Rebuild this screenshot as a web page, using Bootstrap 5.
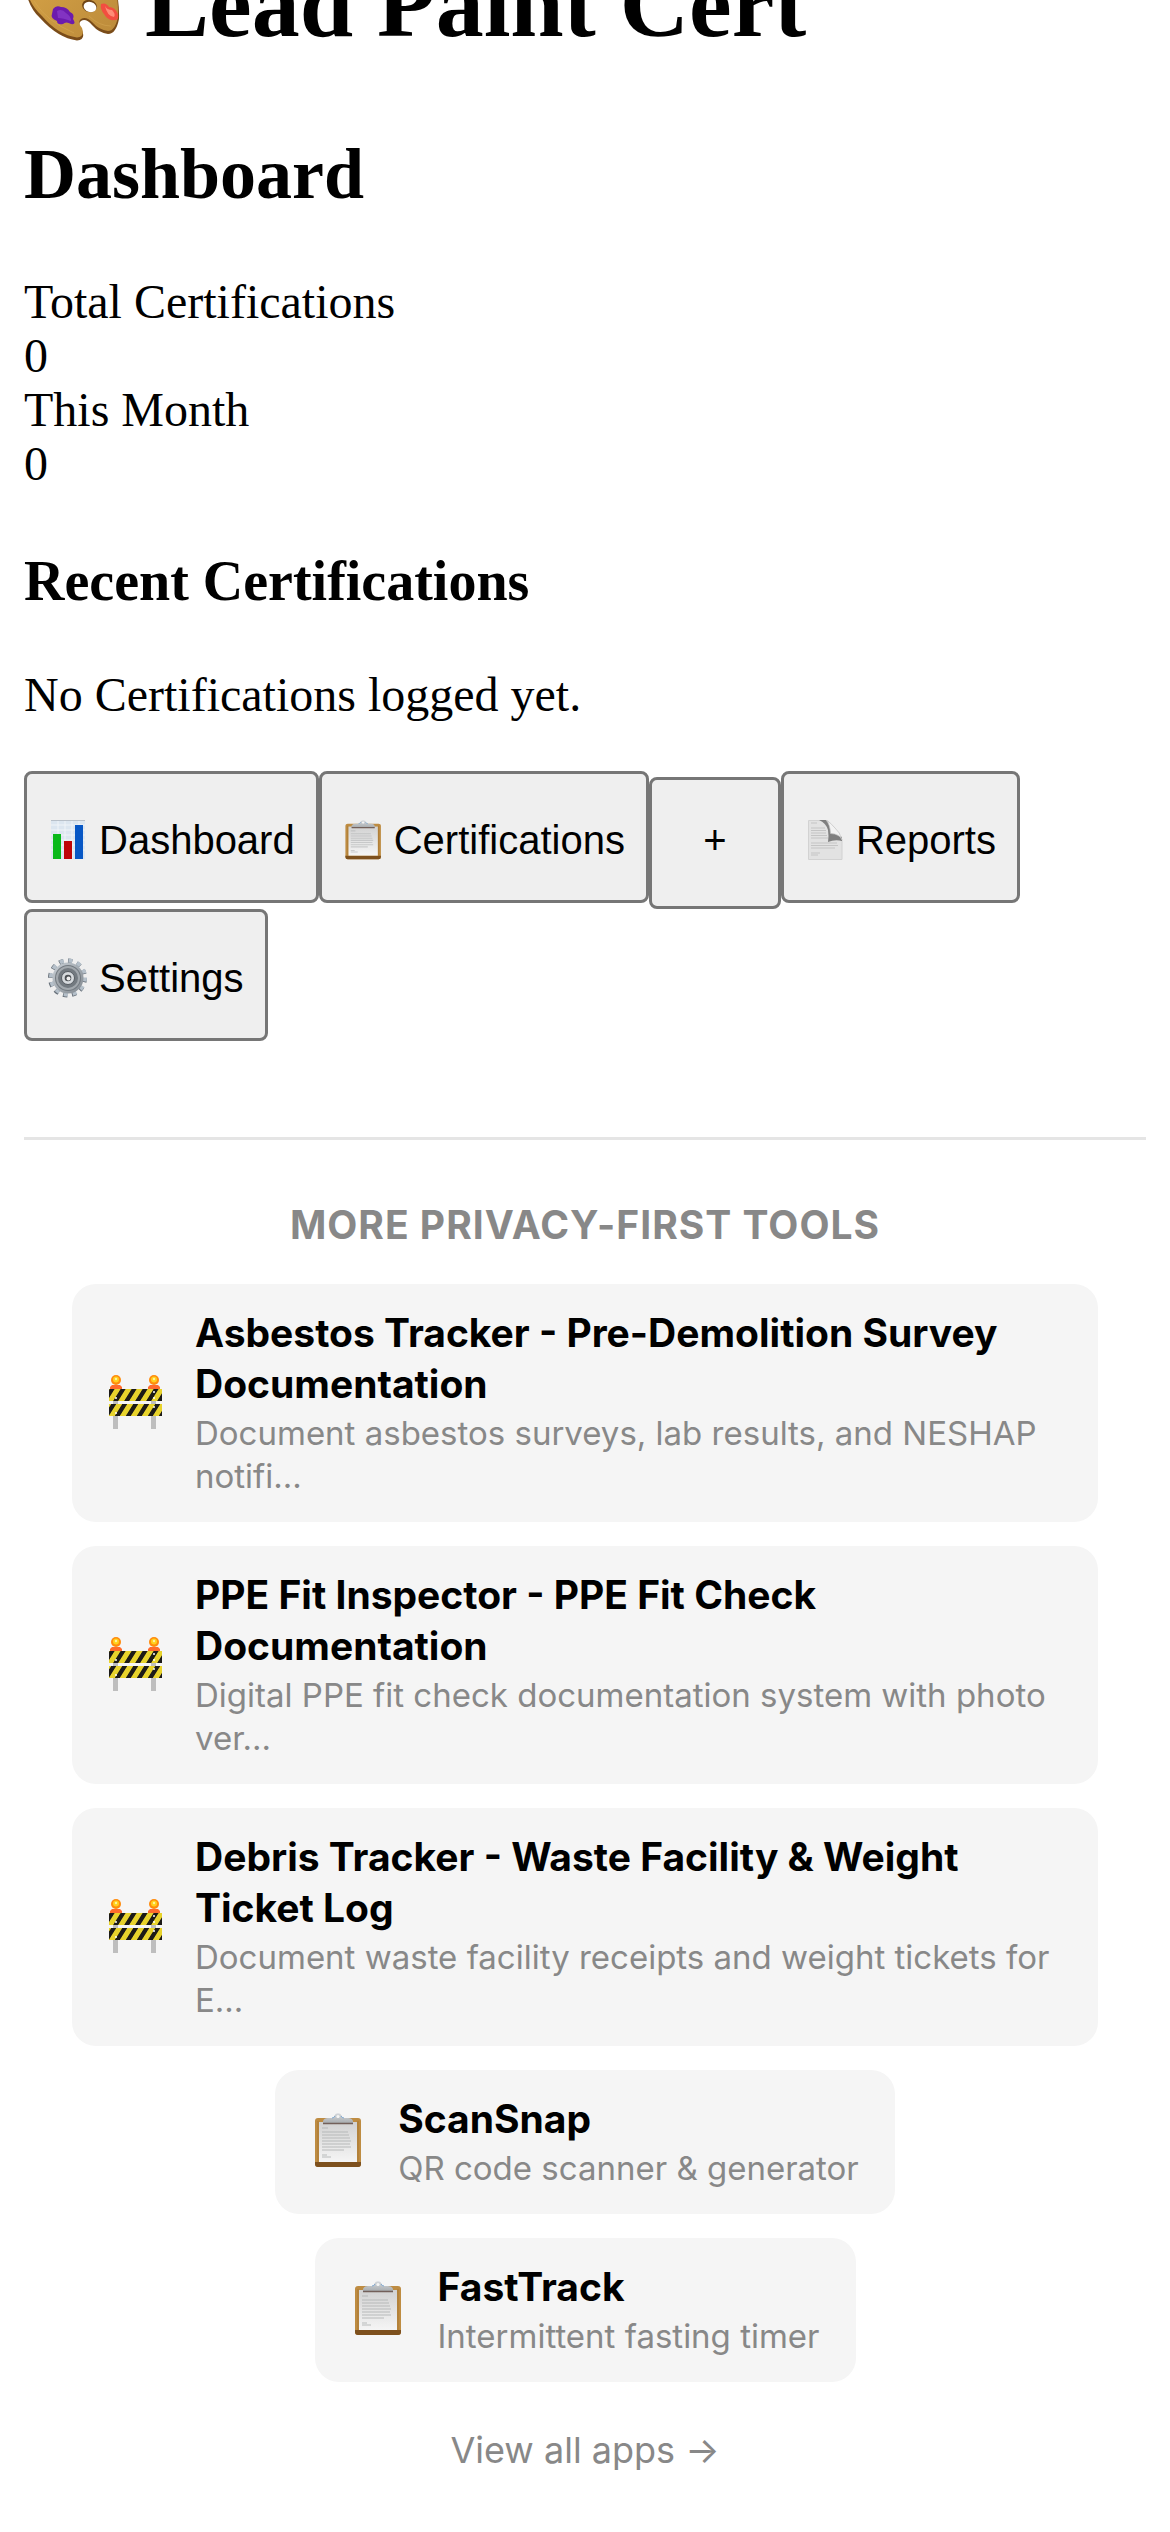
<!DOCTYPE html>
<html lang="en">
<head>
<meta charset="utf-8">
<meta name="viewport" content="width=device-width, initial-scale=1">
<title>Lead Paint Cert</title>
<link href="https://cdn.jsdelivr.net/npm/bootstrap@5.3.0/dist/css/bootstrap.min.css" rel="stylesheet">
<style>
body { font-family: "Liberation Serif", "Times New Roman", serif; font-size: 48px; line-height: 54px; color: #000; background: #fff; overflow-x: hidden; }
h1, h2, h3, p { margin: 0; font-weight: 700; color: #000; }
p { font-weight: 400; }
.app-head { margin-top: -51px; gap: 24px; }
.app-head h1 { font-size: 96px; line-height: 110px; }
.page-title { font-size: 72px; line-height: 83px; margin: 74px 0 59px; }
.recent-title { font-size: 56px; line-height: 64px; margin: 58px 0 55px; }
.tabs { margin-top: 49px; row-gap: 6px; }
.tab-btn { height: 132px; min-width: 132px; padding: 6px 21px 0 18px; gap: 10px; border: 3px solid #767676; border-radius: 8px; background: #efefef; color: #000; font-family: "Liberation Sans", Arial, sans-serif; font-size: 40px; line-height: 46px; }
.tab-add { padding: 0 18px 6px; margin: 6px 0 -6px; }
.more { margin-top: 96px; padding: 61px 48px 56px; border-top: 3px solid #e5e5e5; font-family: Inter, "Liberation Sans", sans-serif; }
.more-title { font-size: 39px; line-height: 48px; font-weight: 700; letter-spacing: 1px; color: #888; margin-bottom: 35px; text-transform: uppercase; }
.tool { padding: 23px 36px 24px; gap: 30px; border-radius: 24px; background: #f5f5f5; color: #000; max-width: 100%; }
.tool-name { font-size: 39px; line-height: 51px; font-weight: 700; margin-bottom: 3px; }
.tool-desc { font-size: 33px; line-height: 43px; color: #888; }
.tool-list { gap: 24px; }
.all-link { margin-top: 46px; font-size: 36px; line-height: 44px; color: #888; }
</style>
</head>
<body>
<svg width="0" height="0" class="position-absolute" aria-hidden="true">
  <defs>
    <linearGradient id="paper" x1="0" y1="0" x2="0" y2="1"><stop offset="0" stop-color="#d2d2d2"/><stop offset="1" stop-color="#f5f5f5"/></linearGradient>
    <linearGradient id="clip" x1="0" y1="0" x2="0" y2="1"><stop offset="0" stop-color="#d5d9dd"/><stop offset="1" stop-color="#a9adb0"/></linearGradient>
    <linearGradient id="wood" x1="0" y1="0" x2="1" y2="1"><stop offset="0" stop-color="#d9a648"/><stop offset="1" stop-color="#bb8a3a"/></linearGradient>
    <linearGradient id="metal" x1="0" y1="0" x2="1" y2="1"><stop offset="0" stop-color="#c9d0d6"/><stop offset="1" stop-color="#80878e"/></linearGradient>
    <linearGradient id="fold" x1="0" y1="1" x2="1" y2="0"><stop offset="0" stop-color="#555"/><stop offset=".5" stop-color="#ddd"/><stop offset="1" stop-color="#fff"/></linearGradient>
    <pattern id="hazard" width="11" height="12" patternUnits="userSpaceOnUse" patternTransform="skewX(-32)"><rect width="11" height="12" fill="#e8d32c"/><rect width="5" height="12" fill="#1c1a17"/></pattern>
    <symbol id="clipboard" viewBox="0 0 57 57">
      <rect x="4" y="5" width="46" height="49" rx="3" fill="#be8c42"/>
      <path d="M4 49h46v2q0 3-3 3H7q-3 0-3-3z" fill="#7d501d"/>
      <path d="M7 8v41M47 8v41" stroke="#a97935" stroke-width="1"/>
      <rect x="8" y="9" width="38" height="40" fill="url(#paper)"/>
      <path d="M11 15h6M11 19h26M11 22h27M11 25h28M11 28h29M11 31h28M11 34h29M11 37h22M11 42h5M11 44h9" stroke="#b4b6b7" stroke-width="1.500" opacity=".6"/>
      <path d="M12 10V8q1-3 5-3h4q2 0 2.500-2.500a3.800 3.800 0 0 1 7 0Q31 5 33 5h4q4 0 5 3v2z" fill="url(#clip)"/>
      <path d="M12 10.500h30" stroke="#73605a" stroke-width="1.500"/>
      <circle cx="27" cy="3.500" r="1.600" fill="#f5f5f5"/>
      <path d="M21 5q2 0 3-2M33 5q-2 0-3-2" stroke="#7fa9d2" fill="none"/>
    </symbol>
    <symbol id="barrier" viewBox="0 0 57 57">
      <path d="M5 14h5v41H5zM43 14h5v41h-5z" fill="#bebebe"/>
      <path d="M2 15v-2l2-2h8l2 2v2zM40 15v-2l2-2h8l2 2v2z" fill="#ff6a2c"/>
      <circle cx="8" cy="6" r="5" fill="#ff8b0d"/><circle cx="46" cy="6" r="5" fill="#ff8b0d"/>
      <circle cx="8" cy="5.500" r="3" fill="#ffd01e"/><circle cx="46" cy="5.500" r="3" fill="#ffd01e"/>
      <circle cx="8" cy="5" r="1.200" fill="#fff2a0"/><circle cx="46" cy="5" r="1.200" fill="#fff2a0"/>
      <rect x="1" y="15" width="53" height="12" fill="url(#hazard)"/>
      <rect x="1" y="30" width="53" height="12" fill="url(#hazard)"/>
      <g fill="#fff"><circle cx="8" cy="24" r="1"/><circle cx="46" cy="18" r="1"/><circle cx="46" cy="24" r="1"/><circle cx="8" cy="39" r="1"/><circle cx="46" cy="33" r="1"/></g>
    </symbol>
  </defs>
</svg>

<main class="px-4">
  <header class="app-head d-flex align-items-center">
    <svg class="flex-shrink-0" width="97" height="96" viewBox="0 0 97 96" aria-hidden="true">
      <path d="M3 40Q-2 10 24 1Q60-8 82 14Q96 32 95 63Q92 78 84 78Q75 77 68 69Q62 62 57 65Q53 68 58 74Q62 84 53 84.500Q34 82 16 62Q7 54 3 40z" fill="#7a4c19"/>
      <path d="M4 39Q-1 9 24 0Q60-8 82 13Q95 31 94 61Q91 75 84 75Q75 74 68 66Q62 60 57 63Q53 66 58 72Q61 81 53 81.500Q34 79 18 60Q8 51 4 39z" fill="url(#wood)"/>
      <path d="M10 45Q22 65 50 77M65 60Q75 70 87 70" stroke="#dcae5b" stroke-width="1" fill="none" opacity=".4"/>
      <ellipse cx="65.500" cy="50" rx="7.500" ry="6" transform="rotate(18 65.500 50)" fill="#704616"/>
      <ellipse cx="66" cy="51" rx="6.500" ry="5" transform="rotate(18 66 51)" fill="#fff"/>
      <path d="M29 53Q32 49 37 51Q43 51 46 56Q51 58 49 63Q53 69 47 68Q42 65 39 68Q33 69 33 65Q26 62 28 58z" fill="#6c1bad"/>
      <path d="M33 55Q38 52 42 57Q47 60 47 65Q39 62 34 62z" fill="#8233c2"/>
      <path d="M77 48Q82 46 85 51Q91 51 94 58Q95 65 90 64Q84 65 80 58Q76 53 77 48z" fill="#f24e40"/>
      <path d="M81 50Q83 54 88 54Q92 58 90 61Q83 60 81 50z" fill="#ff8c76"/>
    </svg>
    <h1>Lead Paint Cert</h1>
  </header>

  <h2 class="page-title">Dashboard</h2>
  <div>Total Certifications</div>
  <div>0</div>
  <div>This Month</div>
  <div>0</div>
  <h3 class="recent-title">Recent Certifications</h3>
  <p>No Certifications logged yet.</p>

  <nav class="tabs d-flex flex-wrap align-items-start" aria-label="Sections">
    <button type="button" class="tab-btn d-inline-flex align-items-center justify-content-center">
      <svg width="44" height="40" viewBox="0 0 44 40" aria-hidden="true"><rect x="6" width="34" height="39" fill="#dce6f0"/><path d="M6 5h34M6 10h34M6 15h34M6 20h34M6 25h34M6 30h34M13 0v39M20 0v39M27 0v39M34 0v39" stroke="#fff" opacity=".6"/><path d="M6 .5h34" stroke="#b8c0c9"/><rect x="8" y="14" width="8" height="25" fill="#08b91b"/><rect x="19" y="21" width="8" height="18" fill="#be0508"/><rect x="30" y="5" width="8" height="34" fill="#0757c5"/></svg>
      <span>Dashboard</span></button>
    <button type="button" class="tab-btn d-inline-flex align-items-center justify-content-center">
      <svg width="44" height="40" viewBox="-1 0 57 55" preserveAspectRatio="none" aria-hidden="true"><use href="#clipboard" x="2" width="57" height="57"/></svg>
      <span>Certifications</span></button>
    <button type="button" class="tab-btn tab-add d-inline-flex align-items-center justify-content-center" aria-label="Add">+</button>
    <button type="button" class="tab-btn d-inline-flex align-items-center justify-content-center">
      <svg width="44" height="40" viewBox="0 0 44 40" aria-hidden="true"><path d="M6.500.5H25q4 4 4 10q9 2 11 10v19H6.500z" fill="#e2e2e2" stroke="#d2d2d2"/><path d="M9 3h6M9 8h14M9 10.500h15M9 13h15M9 15.500h16M9 18h17M9 23h26M9 25.500h27M9 28h24M9 33h9M9 35h7" stroke="#c4c4c4"/><path d="M17 0h7q5 2 5 12l11 5v4q-7-2-14 1q1-6 0-12q-2-7-9-10z" fill="#555" opacity=".7"/><path d="M24 0q4 4 4.500 13.500Q38 14 40 20q-2-8-7-12Q29 3 24 0z" fill="#f3f3f3" stroke="#c0c0c0" stroke-width=".7"/></svg>
      <span>Reports</span></button>
    <button type="button" class="tab-btn d-inline-flex align-items-center justify-content-center">
      <svg width="44" height="40" viewBox="0 0 44 40" aria-hidden="true"><circle cx="22.500" cy="20" r="17" fill="none" stroke="#68717a" stroke-width="5" stroke-dasharray="4.300 4.600"/><circle cx="23" cy="19.500" r="17" fill="none" stroke="#b5c0ca" stroke-width="4" stroke-dasharray="4 4.900"/><circle cx="23" cy="20" r="15.500" fill="url(#metal)"/><circle cx="23" cy="20" r="13" fill="#737a80"/><circle cx="23" cy="20" r="11" fill="none" stroke="#a2a8ad" stroke-width="2"/><circle cx="23" cy="20" r="6.500" fill="#d6dadd" stroke="#565c62"/><circle cx="23" cy="20" r="3.300" fill="#4c5054"/><circle cx="23.500" cy="20.500" r="2" fill="#efefef"/></svg>
      <span>Settings</span></button>
  </nav>

  <section class="more">
    <div class="more-title text-center">More Privacy-First Tools</div>
    <div class="tool-list d-flex flex-column align-items-center">
      <a href="#" class="tool d-flex align-items-center text-decoration-none">
        <svg class="flex-shrink-0" width="57" height="57" aria-hidden="true"><use href="#barrier"/></svg>
        <div><div class="tool-name">Asbestos Tracker - Pre-Demolition Survey Documentation</div><div class="tool-desc">Document asbestos surveys, lab results, and NESHAP notifi...</div></div>
      </a>
      <a href="#" class="tool d-flex align-items-center text-decoration-none">
        <svg class="flex-shrink-0" width="57" height="57" aria-hidden="true"><use href="#barrier"/></svg>
        <div><div class="tool-name">PPE Fit Inspector - PPE Fit Check Documentation</div><div class="tool-desc">Digital PPE fit check documentation system with photo ver...</div></div>
      </a>
      <a href="#" class="tool d-flex align-items-center text-decoration-none">
        <svg class="flex-shrink-0" width="57" height="57" aria-hidden="true"><use href="#barrier"/></svg>
        <div><div class="tool-name">Debris Tracker - Waste Facility &amp; Weight Ticket Log</div><div class="tool-desc">Document waste facility receipts and weight tickets for E...</div></div>
      </a>
      <a href="#" class="tool d-flex align-items-center text-decoration-none">
        <svg class="flex-shrink-0" width="57" height="57" aria-hidden="true"><use href="#clipboard"/></svg>
        <div><div class="tool-name">ScanSnap</div><div class="tool-desc">QR code scanner &amp; generator</div></div>
      </a>
      <a href="#" class="tool d-flex align-items-center text-decoration-none">
        <svg class="flex-shrink-0" width="57" height="57" aria-hidden="true"><use href="#clipboard"/></svg>
        <div><div class="tool-name">FastTrack</div><div class="tool-desc">Intermittent fasting timer</div></div>
      </a>
    </div>
    <div class="all-link text-center"><a href="#" class="text-reset text-decoration-none">View all apps →</a></div>
  </section>
</main>
<script src="https://cdn.jsdelivr.net/npm/bootstrap@5.3.0/dist/js/bootstrap.bundle.min.js"></script>
</body>
</html>
